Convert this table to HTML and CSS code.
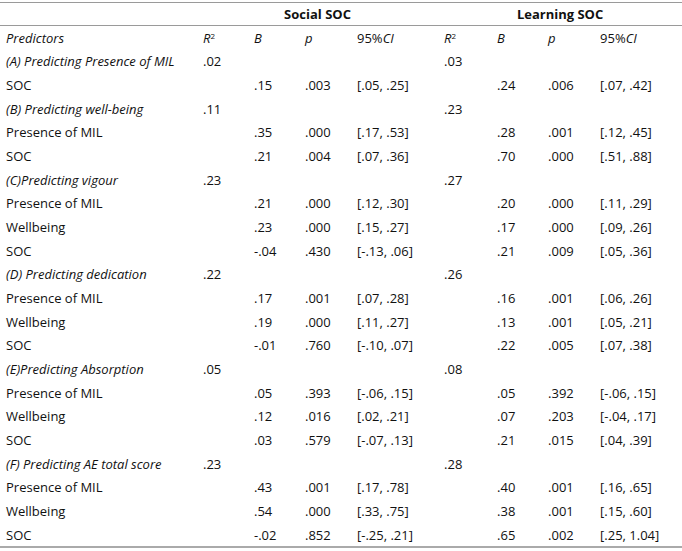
FILE: index.html
```html
<!DOCTYPE html>
<html lang="en">
<head>
<meta charset="utf-8">
<link rel="stylesheet" href="styles.css">
</head>
<body>
<table class="reg">
  <colgroup>
    <col class="c-pred"><col class="c-r"><col class="c-b"><col class="c-p"><col class="c-ci">
    <col class="c-r2"><col class="c-b"><col class="c-p"><col class="c-ci2">
  </colgroup>
  <thead>
    <tr class="group">
      <th></th>
      <th colspan="4">Social SOC</th>
      <th colspan="4">Learning SOC</th>
    </tr>
  </thead>
  <tbody>
    <tr class="sub">
      <td><i>Predictors</i></td><td><i>R</i><sup>2</sup></td><td><i>B</i></td><td><i>p</i></td><td>95%<i>CI</i></td>
      <td><i>R</i><sup>2</sup></td><td><i>B</i></td><td><i>p</i></td><td>95%<i>CI</i></td>
    </tr>
    <tr><td class="h">(A) Predicting Presence of MIL</td><td>.02</td><td></td><td></td><td></td><td>.03</td><td></td><td></td><td></td></tr>
    <tr><td>SOC</td><td></td><td>.15</td><td>.003</td><td>[.05, .25]</td><td></td><td>.24</td><td>.006</td><td>[.07, .42]</td></tr>
    <tr><td class="h">(B) Predicting well-being</td><td>.11</td><td></td><td></td><td></td><td>.23</td><td></td><td></td><td></td></tr>
    <tr><td>Presence of MIL</td><td></td><td>.35</td><td>.000</td><td>[.17, .53]</td><td></td><td>.28</td><td>.001</td><td>[.12, .45]</td></tr>
    <tr><td>SOC</td><td></td><td>.21</td><td>.004</td><td>[.07, .36]</td><td></td><td>.70</td><td>.000</td><td>[.51, .88]</td></tr>
    <tr><td class="h">(C)Predicting vigour</td><td>.23</td><td></td><td></td><td></td><td>.27</td><td></td><td></td><td></td></tr>
    <tr><td>Presence of MIL</td><td></td><td>.21</td><td>.000</td><td>[.12, .30]</td><td></td><td>.20</td><td>.000</td><td>[.11, .29]</td></tr>
    <tr><td>Wellbeing</td><td></td><td>.23</td><td>.000</td><td>[.15, .27]</td><td></td><td>.17</td><td>.000</td><td>[.09, .26]</td></tr>
    <tr><td>SOC</td><td></td><td>-.04</td><td>.430</td><td>[-.13, .06]</td><td></td><td>.21</td><td>.009</td><td>[.05, .36]</td></tr>
    <tr><td class="h">(D) Predicting dedication</td><td>.22</td><td></td><td></td><td></td><td>.26</td><td></td><td></td><td></td></tr>
    <tr><td>Presence of MIL</td><td></td><td>.17</td><td>.001</td><td>[.07, .28]</td><td></td><td>.16</td><td>.001</td><td>[.06, .26]</td></tr>
    <tr><td>Wellbeing</td><td></td><td>.19</td><td>.000</td><td>[.11, .27]</td><td></td><td>.13</td><td>.001</td><td>[.05, .21]</td></tr>
    <tr><td>SOC</td><td></td><td>-.01</td><td>.760</td><td>[-.10, .07]</td><td></td><td>.22</td><td>.005</td><td>[.07, .38]</td></tr>
    <tr><td class="h">(E)Predicting Absorption</td><td>.05</td><td></td><td></td><td></td><td>.08</td><td></td><td></td><td></td></tr>
    <tr><td>Presence of MIL</td><td></td><td>.05</td><td>.393</td><td>[-.06, .15]</td><td></td><td>.05</td><td>.392</td><td>[-.06, .15]</td></tr>
    <tr><td>Wellbeing</td><td></td><td>.12</td><td>.016</td><td>[.02, .21]</td><td></td><td>.07</td><td>.203</td><td>[-.04, .17]</td></tr>
    <tr><td>SOC</td><td></td><td>.03</td><td>.579</td><td>[-.07, .13]</td><td></td><td>.21</td><td>.015</td><td>[.04, .39]</td></tr>
    <tr><td class="h">(F) Predicting AE total score</td><td>.23</td><td></td><td></td><td></td><td>.28</td><td></td><td></td><td></td></tr>
    <tr><td>Presence of MIL</td><td></td><td>.43</td><td>.001</td><td>[.17, .78]</td><td></td><td>.40</td><td>.001</td><td>[.16, .65]</td></tr>
    <tr><td>Wellbeing</td><td></td><td>.54</td><td>.000</td><td>[.33, .75]</td><td></td><td>.38</td><td>.001</td><td>[.15, .60]</td></tr>
    <tr><td>SOC</td><td></td><td>-.02</td><td>.852</td><td>[-.25, .21]</td><td></td><td>.65</td><td>.002</td><td>[.25, 1.04]</td></tr>
  </tbody>
</table>
</body>
</html>
```
FILE: styles.css
```css
html, body {
  margin: 0;
  padding: 0;
  background: #fff;
}
body {
  padding-top: 2px;
  font-family: "Open Sans", "Noto Sans", sans-serif;
  font-size: 13px;
  color: #111;
}
.reg {
  width: 682px;
  border-collapse: collapse;
  table-layout: fixed;
  border-top: 1px solid #9a9a9a;
  border-bottom: 2px solid #aaa;
}
.c-pred { width: 197px; }
.c-r { width: 51px; }
.c-r2 { width: 53px; }
.c-b { width: 51px; }
.c-p { width: 52px; }
.c-ci { width: 87px; }
.c-ci2 { width: 88px; }
.reg th, .reg td {
  padding: 0 0 0 6px;
  text-align: left;
  white-space: nowrap;
  height: 23.66px;
  line-height: 16px;
  vertical-align: middle;
}
.group th {
  height: 22px;
  font-weight: bold;
  text-align: center;
  padding: 0;
  font-size: 13px;
  border-bottom: 1px solid #9a9a9a;
}
.h { font-style: italic; }
sup {
  font-size: 8px;
  vertical-align: 4px;
  line-height: 0;
}
```
